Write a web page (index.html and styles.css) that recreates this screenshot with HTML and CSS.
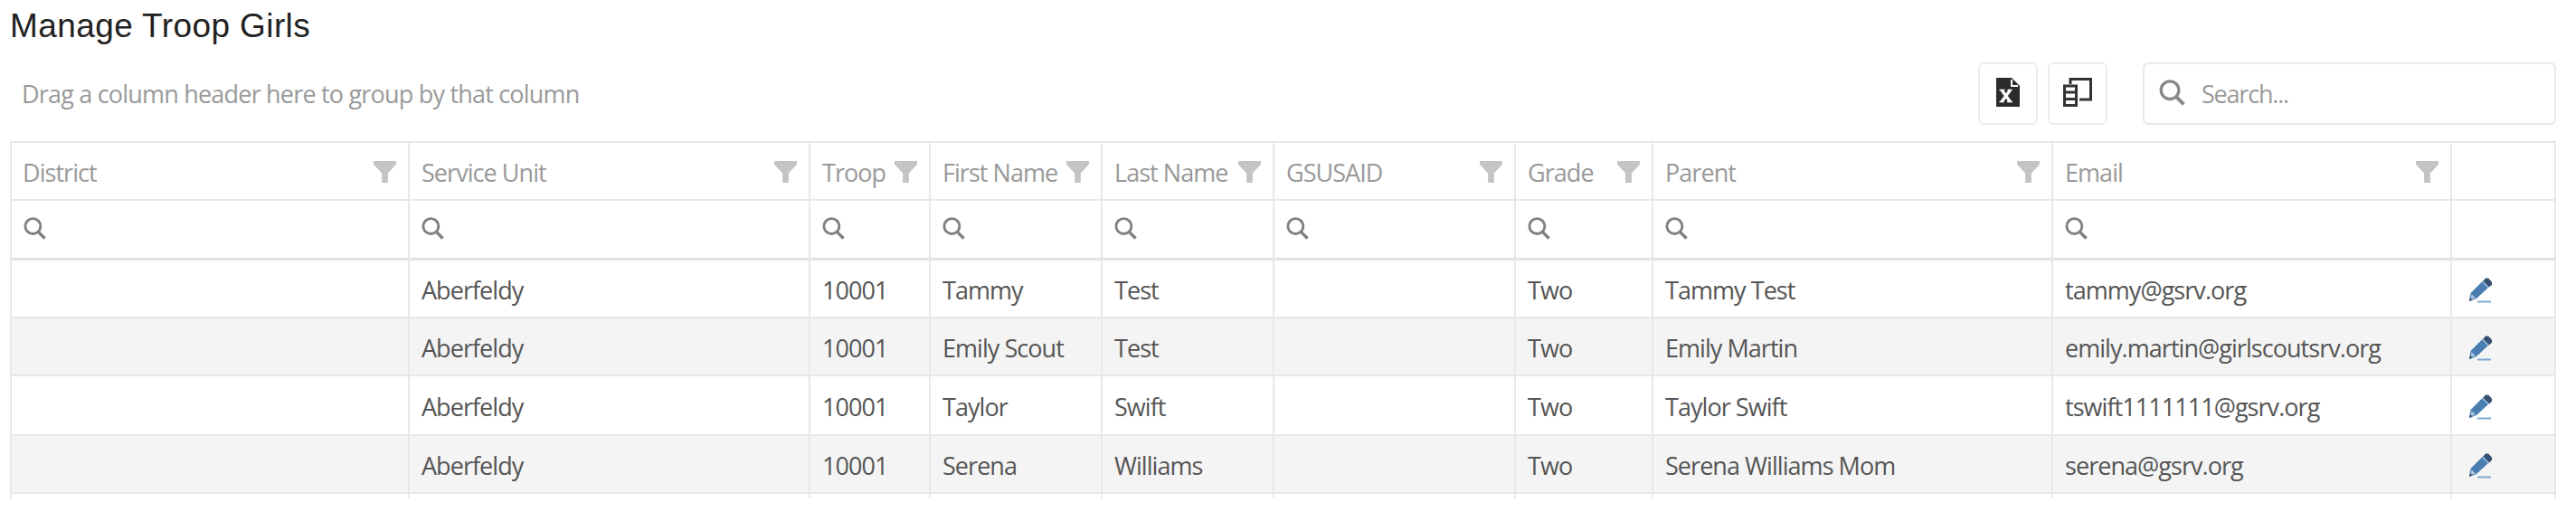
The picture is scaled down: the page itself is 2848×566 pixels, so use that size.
FILE: index.html
```html
<!DOCTYPE html>
<html lang="en">
<head>
    <meta charset="UTF-8" />
    <meta name="viewport" content="width=device-width, initial-scale=1" />
    <title>Manage Troop Girls</title>
    <link rel="stylesheet" href="styles.css">
</head>
<body>
    <svg class="sprite" xmlns="http://www.w3.org/2000/svg">
        <symbol id="filter" viewBox="0 0 26 25">
            <path d="M0 0h26v4L16.500 14v11h-7V14L0 4z" fill="currentColor" />
        </symbol>
        <symbol id="search" viewBox="0 0 26 26">
            <circle cx="10.800" cy="10.500" r="8.800" fill="none" stroke="currentColor" stroke-width="3" />
            <path d="M16.500 16.500l8 8" fill="none" stroke="currentColor" stroke-width="3.600" />
        </symbol>
        <symbol id="pencil" viewBox="0 0 26 28">
            <path d="M16 3.500L23 10 9 23 1 26l1.500-9z" fill="#4a7db0" />
            <path d="M16 4l3-3.500h3L26 4.500v3l-3 3z" fill="#34516f" />
            <path d="M15.500 4l7 7" stroke="#9fc3e6" stroke-width="1.500" />
            <path d="M3.500 18L8 22.500 2.500 24z" fill="#a9c6e2" />
            <path d="M1 26l1-4 2.500 2.500z" fill="#34516f" />
            <path d="M10 26.500h15" stroke="#7fa8d3" stroke-width="2" />
        </symbol>
    </svg>

    <h1>Manage Troop Girls</h1>

    <div class="toolbar">
        <div class="group-panel">Drag a column header here to group by that column</div>
        <button type="button" class="export" aria-label="Export">
            <svg class="icon-export" viewBox="0 0 26 32">
                <path d="M0 0h17l9 9v23H0z" fill="#2b2b2b" />
                <path d="M17 2v7h7" fill="none" stroke="#fff" stroke-width="2" />
                <path d="M6 13.500l9.500 13M15.500 13.500L6 26.500" stroke="#fff" stroke-width="3.400" />
                <path d="M3.500 13.500h6M12.500 13.500h5M3.500 26.500h5M12 26.500h6" stroke="#fff" stroke-width="1.500" />
            </svg>
        </button>
        <button type="button" class="chooser" aria-label="Column chooser">
            <svg class="icon-chooser" viewBox="0 0 32 32">
                <path d="M8 7V1.500h22.500V24H18" fill="none" stroke="#333" stroke-width="3" />
                <path d="M1.500 9h13v21.500h-13zM1.500 16h13M1.500 23.500h13" fill="none" stroke="#333" stroke-width="3" />
            </svg>
        </button>
        <div class="search-box">
            <svg class="icon-find"><use href="#search" /></svg>
            <input type="text" placeholder="Search..." />
        </div>
    </div>

    <table>
        <colgroup>
            <col class="wide">
            <col class="unit">
            <col class="troop">
            <col class="name">
            <col class="name">
            <col class="gsusaid">
            <col class="grade">
            <col class="parent">
            <col class="email">
            <col class="edit">
        </colgroup>
        <thead>
            <tr class="head">
                <th><div>District<svg><use href="#filter" /></svg></div></th>
                <th><div>Service Unit<svg><use href="#filter" /></svg></div></th>
                <th><div>Troop<svg><use href="#filter" /></svg></div></th>
                <th><div>First Name<svg><use href="#filter" /></svg></div></th>
                <th><div>Last Name<svg><use href="#filter" /></svg></div></th>
                <th><div>GSUSAID<svg><use href="#filter" /></svg></div></th>
                <th><div>Grade<svg><use href="#filter" /></svg></div></th>
                <th><div>Parent<svg><use href="#filter" /></svg></div></th>
                <th><div>Email<svg><use href="#filter" /></svg></div></th>
                <th></th>
            </tr>
            <tr class="filters">
                <td><svg><use href="#search" /></svg></td>
                <td><svg><use href="#search" /></svg></td>
                <td><svg><use href="#search" /></svg></td>
                <td><svg><use href="#search" /></svg></td>
                <td><svg><use href="#search" /></svg></td>
                <td><svg><use href="#search" /></svg></td>
                <td><svg><use href="#search" /></svg></td>
                <td><svg><use href="#search" /></svg></td>
                <td><svg><use href="#search" /></svg></td>
                <td></td>
            </tr>
        </thead>
        <tbody>
            <tr class="row">
                <td></td><td>Aberfeldy</td><td>10001</td><td>Tammy</td><td>Test</td><td></td><td>Two</td>
                <td>Tammy Test</td><td>tammy@gsrv.org</td>
                <td><svg class="icon-edit"><use href="#pencil" /></svg></td>
            </tr>
            <tr class="row alt">
                <td></td><td>Aberfeldy</td><td>10001</td><td>Emily Scout</td><td>Test</td><td></td><td>Two</td>
                <td>Emily Martin</td><td>emily.martin@girlscoutsrv.org</td>
                <td><svg class="icon-edit"><use href="#pencil" /></svg></td>
            </tr>
            <tr class="row tall">
                <td></td><td>Aberfeldy</td><td>10001</td><td>Taylor</td><td>Swift</td><td></td><td>Two</td>
                <td>Taylor Swift</td><td>tswift1111111@gsrv.org</td>
                <td><svg class="icon-edit"><use href="#pencil" /></svg></td>
            </tr>
            <tr class="row alt">
                <td></td><td>Aberfeldy</td><td>10001</td><td>Serena</td><td>Williams</td><td></td><td>Two</td>
                <td>Serena Williams Mom</td><td>serena@gsrv.org</td>
                <td><svg class="icon-edit"><use href="#pencil" /></svg></td>
            </tr>
            <tr class="rest">
                <td></td><td></td><td></td><td></td><td></td><td></td><td></td><td></td><td></td><td></td>
            </tr>
        </tbody>
    </table>
</body>
</html>
```

FILE: styles.css
```css
* {
    box-sizing: border-box;
}
body {
    margin: 0;
    padding: 0 22px 0 11px;
    background-color: #fff;
    font-family: "Open Sans", "Noto Sans", sans-serif;
    font-size: 27px;
    letter-spacing: -0.95px;
    color: #555;
    overflow: hidden;
}
.sprite {
    display: none;
}
svg {
    display: block;
    flex: none;
}
h1 {
    margin: 0;
    height: 69px;
    font-family: "Liberation Sans", Arial, sans-serif;
    font-size: 37px;
    font-weight: normal;
    line-height: 57px;
    letter-spacing: 0.4px;
    color: #222;
}
.toolbar {
    display: flex;
    height: 87px;
    align-items: flex-start;
}
.group-panel {
    flex: 1;
    padding-left: 13px;
    line-height: 70px;
    letter-spacing: -0.8px;
    color: #999;
}
button {
    display: flex;
    align-items: center;
    justify-content: center;
    width: 66px;
    height: 69px;
    padding: 0 0 4px;
    border: 2px solid #ececec;
    border-radius: 6px;
    background-color: #fff;
}
.chooser {
    margin: 0 39px 0 11px;
}
.icon-export {
    width: 26px;
    height: 32px;
}
.icon-chooser {
    width: 32px;
    height: 32px;
}
.search-box {
    display: flex;
    align-items: center;
    width: 457px;
    height: 69px;
    padding: 0 16px;
    border: 2px solid #e9e9e9;
    border-radius: 6px;
}
.icon-find {
    width: 29px;
    height: 29px;
    margin-top: -3px;
    color: #888;
}
.search-box input {
    flex: 1;
    min-width: 0;
    margin-left: 18px;
    padding: 0;
    border: none;
    outline: none;
    background: none;
    font: inherit;
    letter-spacing: -1.2px;
}
.search-box input::placeholder {
    color: #999;
}
table {
    width: 2815px;
    table-layout: fixed;
    border-spacing: 0;
    border-top: 2px solid #e8e8e8;
    border-left: 2px solid #e8e8e8;
}
.wide { width: 440px; }
.unit { width: 443px; }
.troop { width: 133px; }
.name { width: 190px; }
.gsusaid { width: 267px; }
.grade { width: 152px; }
.parent { width: 442px; }
.email { width: 441px; }
.edit { width: 115px; }
th,
td {
    padding: 0 0 0 13px;
    border-right: 2px solid #e8e8e8;
    border-bottom: 2px solid #e8e8e8;
    font-weight: normal;
    text-align: left;
    white-space: nowrap;
}
.head {
    height: 64px;
    color: #999;
}
.head div {
    display: flex;
    align-items: center;
    justify-content: space-between;
    padding: 2px 13px 0 0;
}
.head th:first-child {
    padding-left: 12px;
}
.head svg {
    width: 25px;
    height: 24px;
    color: #c4c4c4;
}
.filters {
    height: 66px;
}
.filters td {
    padding-bottom: 2px;
    border-bottom: 3px solid #e2e2e2;
}
.filters svg {
    width: 25px;
    height: 25px;
    color: #808080;
}
.row {
    height: 64px;
}
.row td {
    padding-top: 3px;
    line-height: 36px;
}
.row.tall {
    height: 66px;
}
.alt {
    background-color: #f4f4f4;
}
.icon-edit {
    width: 26px;
    height: 28px;
    margin-left: 5px;
}
.rest {
    height: 5px;
}
.rest td {
    border-bottom: none;
}
```
